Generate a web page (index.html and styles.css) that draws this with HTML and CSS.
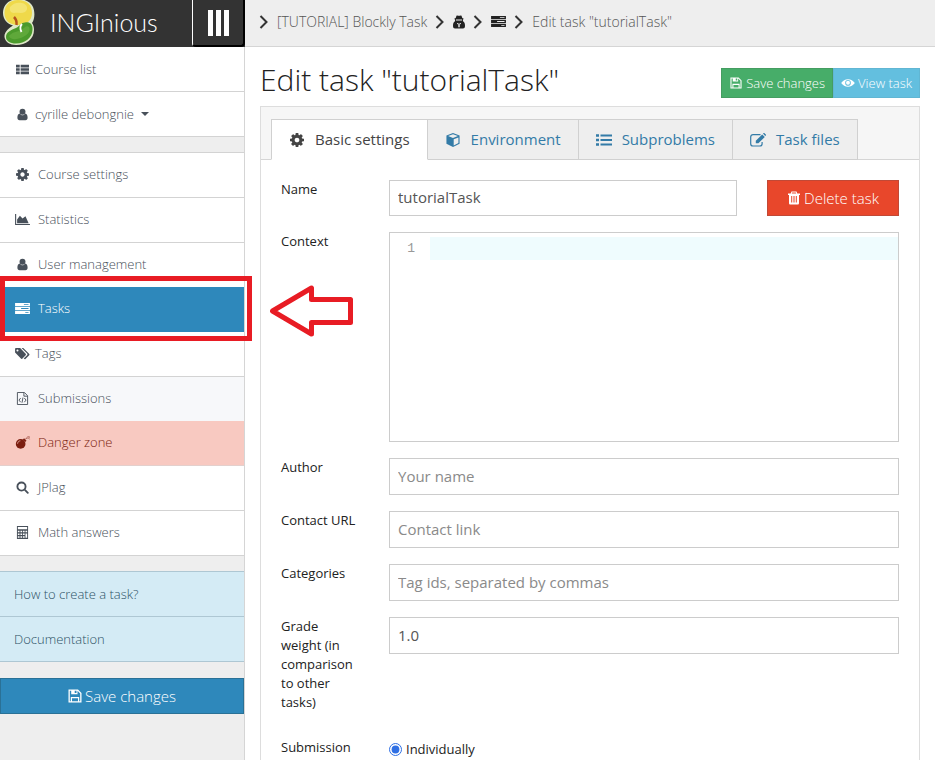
FILE: index.html
```html
<!DOCTYPE html>
<html lang="en">
<head>
<meta charset="utf-8">
<title>Edit task "tutorialTask" | INGInious</title>
<link rel="stylesheet" href="styles.css">
</head>
<body>
<svg class="sprite" aria-hidden="true">
  <symbol id="i-thlist" viewBox="0 0 14 14"><path d="M0 2h4v2.800H0zM5 2h9v2.800H5zM0 5.600h4v2.800H0zM5 5.600h9v2.800H5zM0 9.200h4V12H0zM5 9.200h9V12H5z"/></symbol>
  <symbol id="i-user" viewBox="0 0 14 14"><circle cx="7" cy="4" r="3.200"/><path d="M4.200 6c-1.900.3-2.700 2-2.700 4.500 0 1.700.9 2.700 2.300 2.700h6.400c1.400 0 2.300-1 2.300-2.700 0-2.500-.8-4.200-2.700-4.500C9 7.400 8.100 7.900 7 7.900s-2-.5-2.800-1.900z"/></symbol>
  <symbol id="i-cog" viewBox="0 0 1536 1536"><path d="M1024 768q0-106-75-181t-181-75-181 75-75 181 75 181 181 75 181-75 75-181zm512-109v222q0 12-8 23t-20 13l-185 28q-19 54-39 91 35 50 107 138 10 12 10 25t-9 23q-27 37-99 108t-94 71q-12 0-26-9l-138-108q-44 23-91 38-16 136-29 186-7 28-36 28H657q-14 0-24.500-8.500T621 1506l-28-184q-49-16-90-37l-141 107q-10 9-25 9-14 0-25-11-126-114-165-168-7-10-7-23 0-12 8-23 15-21 51-66.500t54-70.500q-27-50-41-99L29 913q-13-2-21-12.500T0 877V655q0-12 8-23t19-13l186-28q14-46 39-92-40-57-107-138-10-12-10-24 0-10 9-23 26-36 98.500-107.500T337 135q13 0 26 10l138 107q44-23 91-38 16-136 29-186 7-28 36-28h222q14 0 24.500 8.500T915 30l28 184q49 16 90 37l142-107q9-9 24-9 13 0 25 10 129 119 165 170 7 8 7 22 0 12-8 23-15 21-51 66.500t-54 70.500q26 50 41 98l183 28q13 2 21 12.500t8 23.500z"/></symbol>
  <symbol id="i-chart" viewBox="0 0 16 14"><path d="M0 1h1.200v10.800H16V13H0zM2.200 11V7l3-4L8 6l3.200-2.500L14.600 11z"/></symbol>
  <symbol id="i-tasks" viewBox="0 0 16 14"><path fill-rule="evenodd" d="M0 1h16v3.500H0zM9.500 2.300h5v1h-5zM0 5.300h16v3.400H0zM6.500 6.500h8v1h-8zM0 9.500h16V13H0zM11 10.700h3.500v1H11z"/></symbol>
  <symbol id="i-tags" viewBox="0 0 16 14"><path fill-rule="evenodd" d="M0 2v4l6.300 6.500c.5.500 1 .5 1.400.1l3.700-3.800c.5-.5.400-1 0-1.400L5.500 1H1C.4 1 0 1.400 0 2zm2.600 2.800a1.100 1.100 0 1 1 0-2.200 1.100 1.100 0 0 1 0 2.200z"/><path d="M7 1h1.800l6.300 6.300c.6.600.6 1 .1 1.600l-4 4c-.5.400-1 .300-1.500-.2l-.4-.4 3.600-3.500c.6-.6.600-1.300.1-1.900z"/></symbol>
  <symbol id="i-code" viewBox="0 0 14 14"><path fill="none" stroke="currentColor" d="M1.500.5h7.500l3.500 3.500v9.500h-11zM8.500.5v4h4M5 6.500 3.200 8.700 5 11M9 6.500l1.800 2.200L9 11M7.500 6l-1 5.500"/></symbol>
  <symbol id="i-bomb" viewBox="0 0 16 14"><circle cx="6" cy="8.500" r="5.200"/><path d="m8.300 3.800 1.400-1.400 2.600 2.600-1.400 1.400z"/><path fill="none" stroke="currentColor" stroke-width=".8" d="M11 3.700c.8-1.700 2-1.500 2.700-1.500M14 .2v1M15.800 2h-1M15.300.6l-.8.800M15.400 3.500l-.8-.8"/><path fill="none" stroke="#f8c9c1" stroke-width=".8" d="M2.700 8.300C2.800 6.500 4 5.300 5.700 5.200"/></symbol>
  <symbol id="i-search" viewBox="0 0 14 14"><path fill="none" stroke="currentColor" stroke-width="2" stroke-linecap="round" d="m9.300 9.300 3.400 3.400M10.300 6a4.400 4.400 0 1 1-8.800 0 4.400 4.400 0 0 1 8.800 0z"/></symbol>
  <symbol id="i-calc" viewBox="0 0 14 14"><path fill-rule="evenodd" d="M1 0h12v14H1zM2 1.200v2.300h10V1.200zM2 5h1.800v1.700H2zM4.800 5h1.800v1.700H4.800zM7.500 5h1.800v1.700H7.500zM10.200 5H12v1.700h-1.800zM2 8h1.800v1.700H2zM4.800 8h1.800v1.700H4.800zM7.500 8h1.800v1.700H7.500zM2 11h1.800v1.700H2zM4.800 11h1.800v1.700H4.800zM7.500 11h1.800v1.700H7.500zM10.200 8H12v4.700h-1.800z"/></symbol>
  <symbol id="i-save" viewBox="0 0 14 14"><path fill-rule="evenodd" d="M.5.500H10L13.500 4v9.500H.5zM1.800 1.800v10.500h1V8h8.400v4.300h1V4.500L9.500 1.800v3.500H3.200V1.800zM6.700 1.800V4h1.800V1.800zM4 9.200v3.100h6V9.200z"/></symbol>
  <symbol id="i-eye" viewBox="0 0 16 14"><path fill-rule="evenodd" d="M8 2.500c3.300 0 6 1.700 8 4.500-2 2.800-4.700 4.500-8 4.500S2 9.800 0 7c2-2.800 4.700-4.500 8-4.500zM8 3.600a3.300 3.300 0 1 0 0 6.600 3.300 3.300 0 0 0 0-6.600z"/><circle cx="8" cy="6.800" r="2.300"/></symbol>
  <symbol id="i-trash" viewBox="0 0 14 14"><path fill-rule="evenodd" d="M4.500.5h5l.8 2H13v1.400h-1V12c0 1-.6 1.600-1.400 1.600H3.400C2.600 13.600 2 13 2 12V3.900H1V2.500h2.700zM5.200 1.500l-.4 1h4.400l-.4-1zM4.200 5v6.500h1V5zM6.500 5v6.500h1V5zM8.800 5v6.500h1V5z"/></symbol>
  <symbol id="i-cube" viewBox="0 0 16 16"><path fill-rule="evenodd" d="M8 0l7.500 2.800v9.400L8 16 .5 12.200V2.800zM8 1.400 2.400 3.500 8 5.600l5.600-2.100zM8.800 7v7.200l5.400-2.800V5z"/></symbol>
  <symbol id="i-list" viewBox="0 0 16 14"><path d="M0 1.200h3v2.600H0zM4.500 1.400H16v2.200H4.500zM0 5.700h3v2.600H0zM4.500 5.900H16v2.200H4.500zM0 10.200h3v2.600H0zM4.500 10.400H16v2.200H4.500z"/></symbol>
  <symbol id="i-edit" viewBox="0 0 16 14"><path fill="none" stroke="currentColor" stroke-width="1.200" d="M10.500 1.600H3A2.300 2.300 0 0 0 .7 3.900v6.800A2.300 2.300 0 0 0 3 13h6.800a2.300 2.300 0 0 0 2.300-2.300V9"/><path d="m12.200 1.400 2.600 2.500-6.400 6.300H5.800V7.700zM13 .6l.7-.5c.3-.2.6-.1.800.1l1.300 1.300c.3.300.3.600 0 .9l-.6.700z"/></symbol>
  <symbol id="i-chev" viewBox="0 0 10 14"><path fill="none" stroke="currentColor" stroke-width="2" d="m1.500 1 6 6-6 6"/></symbol>
  <symbol id="i-secret" viewBox="0 0 12 14"><path fill-rule="evenodd" d="M3.500.7c.8-.7 1.500 0 2.500 0s1.700-.7 2.500 0L9.300 3l1.500.8-.9 1 .1 1.500C11.500 7 12 8.500 12 11c0 1.700-.8 2.500-2 2.500H2C.8 13.500 0 12.700 0 11c0-2.500.5-4 2-4.700l.1-1.500-.9-1L2.700 3zM3 4.400v1h6v-1zM4 8v1l1 .3v3h.7V8.600zM8 8v1l-1 .3v3h-.7V8.600z"/></symbol>
</svg>

<div class="app">
  <aside class="sidebar">
    <header class="brand">
      <a class="brand-link" href="#">
        <svg class="logo" viewBox="0 0 35 47" aria-hidden="true">
          <path fill="#dfe8c8" d="M18-1C9-1 3 5 3 13c0 6 4 11 10 12.500C9 28 4 32 4.500 37 5 42 10 45 16 45c10 0 18-6 18-15 0-3-.5-5-2-7 3-4 3-11 1-16-2-5-8-8-15-8z"/>
          <path fill="#efd94a" d="M18 0C9 0 4.500 6 4.500 13S9 25 18 25c8 0 14-4 14-12S27 0 18 0z"/>
          <path fill="#f3e472" d="M10 7c3-4 8-5 12-4 5 1 7 6 3 9-4 2-8 0-11 1-3 0-5-3-4-6z"/>
          <path fill="#4b9a2c" d="M25 22.500c4-1 8 1 7.500 7.500C32 38 25 43.500 16 43.500 10 43.500 6 41 6 37c0-5 5-7 10-9 4-2 5-5.500 9-5.500z"/>
          <path fill="#5fa83a" d="M9 36c3-4 8-4 12-6 4-2 5-5 8-3 2 3-1 8-6 10-6 3-13 3-14-1z"/>
          <path fill="none" stroke="#b4531d" stroke-width="2.500" d="M14 17c2 2 3 4 2.500 8"/>
          <path fill="none" stroke="#fff" stroke-width="1.800" d="M22 24c-2 2-2 5-.5 8"/>
        </svg>
        <span class="brand-name">INGInious</span>
      </a>
      <button class="menu-toggle" type="button" aria-label="Toggle menu"><span></span><span></span><span></span></button>
    </header>
    <nav class="menu">
      <a class="item" href="#"><svg class="icon"><use href="#i-thlist"/></svg>Course list</a>
      <a class="item" href="#"><svg class="icon"><use href="#i-user"/></svg>cyrille debongnie<span class="caret"></span></a>
    </nav>
    <nav class="menu separated course">
      <a class="item wide" href="#"><svg class="icon"><use href="#i-cog"/></svg>Course settings</a>
      <a class="item wide" href="#"><svg class="icon"><use href="#i-chart"/></svg>Statistics</a>
      <a class="item wide plain" href="#"><svg class="icon"><use href="#i-user"/></svg>User management</a>
      <a class="item wide active" href="#"><svg class="icon"><use href="#i-tasks"/></svg>Tasks<span class="highlight"></span>
        <svg class="arrow" viewBox="0 0 84 54" aria-hidden="true"><path d="M2.500 27 41.500 4v11.500h39v23h-39V50z"/></svg></a>
      <a class="item" href="#"><svg class="icon"><use href="#i-tags"/></svg>Tags</a>
      <a class="item wide plain muted" href="#"><svg class="icon"><use href="#i-code"/></svg>Submissions</a>
      <a class="item wide danger" href="#"><svg class="icon"><use href="#i-bomb"/></svg>Danger zone</a>
      <a class="item wide" href="#"><svg class="icon"><use href="#i-search"/></svg>JPlag</a>
      <a class="item wide" href="#"><svg class="icon"><use href="#i-calc"/></svg>Math answers</a>
    </nav>
    <nav class="menu separated help">
      <a class="item" href="#">How to create a task?</a>
      <a class="item" href="#">Documentation</a>
    </nav>
    <button class="btn save-side" type="button"><svg class="icon"><use href="#i-save"/></svg>Save changes</button>
  </aside>

  <div class="content">
    <nav class="crumbs">
      <svg class="chev"><use href="#i-chev"/></svg><a href="#">[TUTORIAL] Blockly Task</a>
      <svg class="chev"><use href="#i-chev"/></svg><a href="#" aria-label="Administration"><svg class="crumb-icon narrow"><use href="#i-secret"/></svg></a>
      <svg class="chev"><use href="#i-chev"/></svg><a href="#" aria-label="Tasks"><svg class="crumb-icon"><use href="#i-tasks"/></svg></a>
      <svg class="chev"><use href="#i-chev"/></svg><a href="#">Edit task "tutorialTask"</a>
    </nav>
    <main class="page">
      <div class="title-row">
        <h1>Edit task "tutorialTask"</h1>
        <div class="actions">
          <button class="btn small green" type="button"><svg class="icon"><use href="#i-save"/></svg>Save changes</button>
          <button class="btn small blue" type="button"><svg class="icon"><use href="#i-eye"/></svg>View task</button>
        </div>
      </div>
      <section class="panel">
        <nav class="tabs">
          <a class="tab current" href="#"><svg class="icon"><use href="#i-cog"/></svg>Basic settings</a>
          <a class="tab" href="#"><svg class="icon"><use href="#i-cube"/></svg>Environment</a>
          <a class="tab" href="#"><svg class="icon"><use href="#i-list"/></svg>Subproblems</a>
          <a class="tab" href="#"><svg class="icon"><use href="#i-edit"/></svg>Task files</a>
        </nav>
        <form class="form">
          <div class="field">
            <label for="name">Name</label>
            <div class="with-button">
              <input class="text" id="name" type="text" value="tutorialTask">
              <button class="btn red" type="button"><svg class="icon"><use href="#i-trash"/></svg>Delete task</button>
            </div>
          </div>
          <div class="field">
            <label for="context">Context</label>
            <div class="editor"><span class="gutter">1</span><textarea id="context"></textarea></div>
          </div>
          <div class="field">
            <label for="author">Author</label>
            <input class="text" id="author" type="text" placeholder="Your name">
          </div>
          <div class="field">
            <label for="url">Contact URL</label>
            <input class="text" id="url" type="text" placeholder="Contact link">
          </div>
          <div class="field">
            <label for="categories">Categories</label>
            <input class="text" id="categories" type="text" placeholder="Tag ids, separated by commas">
          </div>
          <div class="field">
            <label for="weight">Grade weight (in comparison to other tasks)</label>
            <input class="text" id="weight" type="text" value="1.0">
          </div>
          <div class="field modes" role="radiogroup" aria-labelledby="mode-label">
            <span class="label" id="mode-label">Submission</span>
            <label class="radio" for="individually"><input id="individually" type="radio" name="mode" checked>Individually</label>
          </div>
        </form>
      </section>
    </main>
  </div>
</div>
</body>
</html>
```
FILE: styles.css
```css
* { box-sizing: border-box; }

body {
  margin: 0;
  background: #fff;
  color: #222;
  font-family: "Open Sans", sans-serif;
  font-size: 13px;
  line-height: 19px;
}

a { color: inherit; text-decoration: none; }
svg { fill: currentColor; flex: none; }
button, input, textarea { font: inherit; }

.sprite { position: absolute; width: 0; height: 0; }

.app {
  display: flex;
  height: 100vh;
  overflow: hidden;
}

/* Sidebar */
.sidebar {
  flex: none;
  width: 245px;
  background: #eee;
  border-right: 1px solid #d5d5d5;
}

.brand {
  display: flex;
  height: 47px;
  margin-right: -1px;
  background: #333;
  color: #fff;
}

.brand-link {
  display: flex;
  flex: 1;
  align-items: center;
  gap: 15px;
}

.logo { width: 35px; height: 47px; }

.brand-name {
  padding-bottom: 3px;
  font-family: Lato, "Open Sans", sans-serif;
  font-size: 25px;
  font-weight: 300;
  line-height: 40px;
}

.menu-toggle {
  display: flex;
  justify-content: center;
  align-items: center;
  gap: 3px;
  width: 53px;
  padding: 0;
  border: 2px solid #000;
  border-top: 0;
  border-left: 1px solid #fff;
  border-radius: 0 0 4px 4px;
  background: #333;
}

.menu-toggle span { width: 5px; height: 26px; background: #fff; }

.menu { color: #48505a; font-weight: 300; }
.separated { margin-top: 15px; border-top: 1px solid #d3d3d3; }

.item {
  display: flex;
  align-items: center;
  gap: 4px;
  height: 45px;
  padding: 0 14px;
  border-bottom: 1px solid #d3d3d3;
  background: #fff;
}

.course .item { padding-bottom: 2px; }
.item.wide { gap: 7px; }
.item .icon { width: 17px; height: 13px; }
.item.plain { height: 44px; border-bottom: 0; }
.item.muted { background: #f7f8fa; }
.item.danger { border-color: #e3d0cd; background: #f8c9c1; color: #7c1e10; }

.item.active {
  position: relative;
  border-color: #2e88bb;
  background: #2e88bb;
  color: #fff;
}

.highlight {
  position: absolute;
  z-index: 1;
  inset: -11px -8px -10px 0;
  border: 5px solid #e81c24;
}

.arrow {
  position: absolute;
  z-index: 1;
  left: 270px;
  top: -3px;
  width: 84px;
  height: 54px;
  fill: none;
  stroke: #e81c24;
  stroke-width: 5;
  stroke-linejoin: round;
}

.caret {
  margin-left: 3px;
  border: 4px solid transparent;
  border-top-color: currentColor;
  border-bottom: 0;
}

.help, .help .item { border-color: #aec7d3; }
.help { color: #2d5266; }
.help .item { background: #d4ebf5; }

/* Buttons */
.btn {
  display: flex;
  justify-content: center;
  align-items: center;
  gap: 3px;
  height: 36px;
  border: 1px solid;
  color: #fff;
  font-size: 15px;
  font-weight: 300;
}

.btn .icon { width: 14px; height: 14px; }
.save-side { width: 100%; margin-top: 16px; background: #2e88bb; border-color: #2a7196; }
.small { height: 30px; padding: 0 7px; font-size: 13px; }
.small .icon { height: 12px; }
.green { background: #47ad69; border-color: #459d61; }
.blue { background: #63bfdf; border-color: #61b6d3; }
.red { width: 132px; background: #e8472b; border-color: #c14936; }

/* Main area */
.content { flex: 1; min-width: 0; }

.crumbs {
  display: flex;
  align-items: center;
  gap: 8px;
  height: 47px;
  padding: 0 14px 3px;
  background: #eee;
  border-bottom: 1px solid #d5d5d5;
  color: #555;
  font-size: 14px;
  font-weight: 300;
}

.crumbs a { display: flex; }
.chev { width: 10px; height: 14px; color: #333; }
.crumb-icon { width: 15px; height: 13px; color: #222; }
.crumb-icon.narrow { width: 12px; height: 14px; }

.page { padding: 13px 15px; }

.title-row {
  display: flex;
  justify-content: space-between;
  align-items: center;
  height: 46px;
  padding-bottom: 6px;
}

h1 { margin: 0; font-size: 30px; font-weight: 300; line-height: 40px; }

.actions { display: flex; padding-top: 6px; }

.panel { border: 1px solid #ddd; }

.tabs {
  display: flex;
  height: 53px;
  padding: 12px 10px 0;
  background: #f6f6f6;
  border-bottom: 1px solid #d5d5d5;
}

.tab {
  display: flex;
  align-items: center;
  gap: 10px;
  height: 41px;
  padding: 0 17px;
  margin-bottom: -1px;
  border: 1px solid #d0d0d0;
  border-left-width: 0;
  background: #eee;
  color: #337ba7;
  font-size: 15px;
}

.tab:first-child { border-left-width: 1px; }
.tab.current { border-bottom-color: #fff; background: #fff; color: #444; }
.tab .icon { width: 16px; height: 14px; }

.form { display: grid; gap: 16px; padding: 20px; }

.field {
  display: grid;
  grid-template-columns: 78px minmax(0, 1fr);
  gap: 30px;
  align-items: start;
}

.text {
  width: 100%;
  height: 37px;
  padding: 0 8px 2px;
  border: 1px solid #ccc;
  border-radius: 0;
  background: #fff;
  color: #555;
  font-size: 15px;
}

.text::placeholder { color: #8a8a8a; opacity: 1; }

.with-button { display: flex; gap: 30px; height: 36px; }
.with-button .text { flex: 1; min-width: 0; height: 36px; }

.editor {
  display: flex;
  height: 210px;
  padding-top: 4px;
  border: 1px solid #ccc;
}

.gutter {
  width: 40px;
  padding-right: 15px;
  color: #999;
  font-family: "Liberation Mono", monospace;
  font-size: 13px;
  line-height: 23px;
  text-align: right;
}

.editor textarea {
  flex: 1;
  min-width: 0;
  border: 0;
  outline: 0;
  resize: none;
  background: linear-gradient(#effcfe, #effcfe) 0 0 / 100% 23px no-repeat;
}

.modes { margin-top: 10px; }
.radio { display: flex; align-items: center; gap: 4px; padding-top: 2px; }
.radio input { width: 13px; height: 13px; margin: 0; accent-color: #2f6fe4; }
```
